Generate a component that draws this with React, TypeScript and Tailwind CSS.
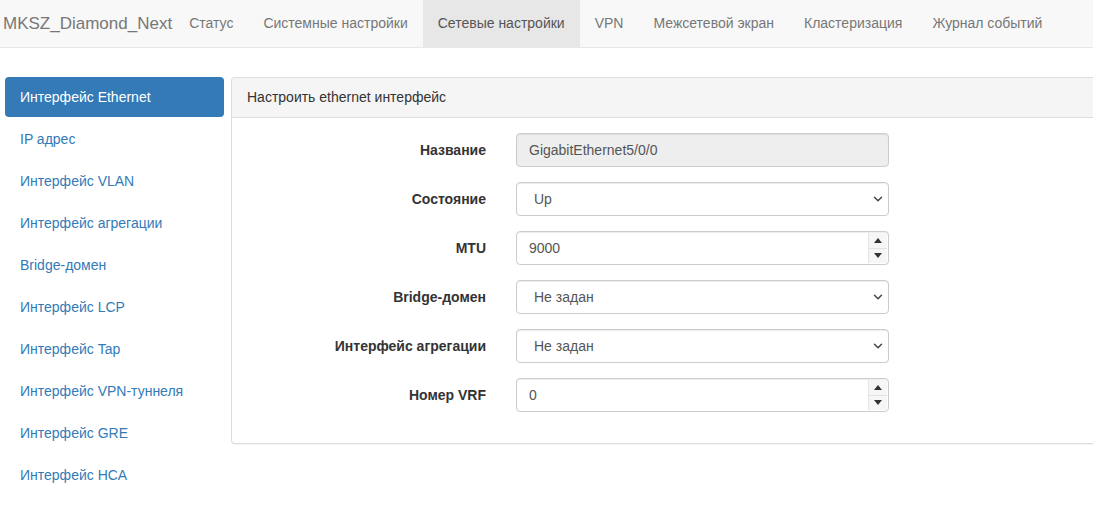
import { ChevronDown } from "lucide-react";

const navItems = [
  "Статус",
  "Системные настройки",
  "Сетевые настройки",
  "VPN",
  "Межсетевой экран",
  "Кластеризация",
  "Журнал событий",
];

const sideItems = [
  "Интерфейс Ethernet",
  "IP адрес",
  "Интерфейс VLAN",
  "Интерфейс агрегации",
  "Bridge-домен",
  "Интерфейс LCP",
  "Интерфейс Tap",
  "Интерфейс VPN-туннеля",
  "Интерфейс GRE",
  "Интерфейс HCA",
];

function SelectBox({ value }: { value: string }) {
  return (
    <div className="flex h-[34px] w-[373px] items-center justify-between rounded-[4px] border border-[#ccc] bg-white pl-[17px] pr-[3px] text-[14px] text-[#555] shadow-[inset_0_1px_1px_rgba(0,0,0,0.075)]">
      <span>{value}</span>
      <ChevronDown className="h-[14px] w-[14px] text-[#444]" strokeWidth={2.5} />
    </div>
  );
}

function NumberBox({ value }: { value: string }) {
  return (
    <div className="flex h-[34px] w-[373px] items-stretch rounded-[4px] border border-[#ccc] bg-white text-[14px] text-[#555] shadow-[inset_0_1px_1px_rgba(0,0,0,0.075)]">
      <span className="flex flex-1 items-center pl-[12px]">{value}</span>
      <div className="my-[1px] mr-[1px] flex w-[19px] flex-col border-l border-[#e3e3e3] bg-[#f6f6f6]">
        <div className="flex flex-1 items-center justify-center border-b border-[#e3e3e3]">
          <svg width="8" height="5" viewBox="0 0 8 5">
            <path d="M0 5 L4 0 L8 5 Z" fill="#333" />
          </svg>
        </div>
        <div className="flex flex-1 items-center justify-center">
          <svg width="8" height="5" viewBox="0 0 8 5">
            <path d="M0 0 L4 5 L8 0 Z" fill="#333" />
          </svg>
        </div>
      </div>
    </div>
  );
}

function FormRow({ label, children }: { label: string; children: React.ReactNode }) {
  return (
    <div className="flex items-center">
      <label className="w-[269px] pr-[15px] text-right text-[14px] font-bold text-[#333]">{label}</label>
      <div className="pl-[15px]">{children}</div>
    </div>
  );
}

export default function App() {
  return (
    <div
      className="min-h-[508px] bg-white text-[14px] text-[#333]"
      style={{ fontFamily: '"Liberation Sans", Arial, sans-serif' }}
    >
      <nav className="flex h-[48px] items-stretch border-b border-[#e7e7e7] bg-[#f8f8f8]">
        <div className="flex items-center pl-[3px] pr-[2px] text-[17px] text-[#777]">MKSZ_Diamond_Next</div>
        {navItems.map((item) => (
          <div
            key={item}
            className={
              item === "Сетевые настройки"
                ? "flex items-center bg-[#e7e7e7] px-[15px] text-[#555]"
                : "flex items-center px-[15px] text-[#777]"
            }
          >
            {item}
          </div>
        ))}
      </nav>

      <div className="flex pt-[29px]">
        <ul className="ml-[5px] flex w-[219px] flex-col gap-[2px]">
          {sideItems.map((item, i) => (
            <li
              key={item}
              className={
                i === 0
                  ? "flex h-[40px] items-center rounded-[4px] bg-[#337ab7] px-[15px] text-white"
                  : "flex h-[40px] items-center rounded-[4px] px-[15px] text-[#337ab7]"
              }
            >
              {item}
            </li>
          ))}
        </ul>

        <div className="ml-[7px] h-[367px] flex-1 rounded-l-[4px] border border-r-0 border-[#ddd] shadow-[0_1px_1px_rgba(0,0,0,0.05)]">
          <div className="flex h-[40px] items-center rounded-tl-[3px] border-b border-[#ddd] bg-[#f5f5f5] px-[15px] text-[#333]">
            Настроить ethernet интерфейс
          </div>
          <div className="flex flex-col gap-[15px] py-[15px]">
            <FormRow label="Название">
              <div className="flex h-[34px] w-[373px] items-center rounded-[4px] border border-[#ccc] bg-[#eee] pl-[12px] text-[#555] shadow-[inset_0_1px_1px_rgba(0,0,0,0.075)]">
                GigabitEthernet5/0/0
              </div>
            </FormRow>
            <FormRow label="Состояние">
              <SelectBox value="Up" />
            </FormRow>
            <FormRow label="MTU">
              <NumberBox value="9000" />
            </FormRow>
            <FormRow label="Bridge-домен">
              <SelectBox value="Не задан" />
            </FormRow>
            <FormRow label="Интерфейс агрегации">
              <SelectBox value="Не задан" />
            </FormRow>
            <FormRow label="Номер VRF">
              <NumberBox value="0" />
            </FormRow>
          </div>
        </div>
      </div>
    </div>
  );
}
